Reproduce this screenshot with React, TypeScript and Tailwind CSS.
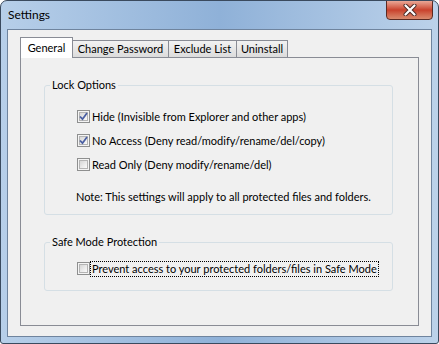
import React from "react";

const font = { fontFamily: 'Lato, "Noto Sans", sans-serif' };

function CheckBox({ checked }: { checked: boolean }) {
  return (
    <span className="w-[13px] h-[13px] shrink-0 border border-[#8e8f8f] bg-[#f4f4f4] p-[1px] flex">
      <span className="flex-1 border border-[#b4b4b4] bg-gradient-to-br from-[#d6d6d6] to-[#fbfbfb] flex items-center justify-center">
        {checked && (
          <svg width="9" height="9" viewBox="0 0 9 9" className="-m-[1px]">
            <path d="M1 4.5 L3.5 7.2 L8 1" fill="none" stroke="#4a5fa3" strokeWidth="1.8" />
          </svg>
        )}
      </span>
    </span>
  );
}

function Option({ label, checked, focused }: { label: string; checked: boolean; focused?: boolean }) {
  return (
    <div className="flex items-center h-[13px]">
      <CheckBox checked={checked} />
      <span
        className={`ml-[1px] px-[1px] leading-[14px] whitespace-nowrap ${
          focused ? "outline outline-1 outline-dotted outline-black" : ""
        }`}
      >
        {label}
      </span>
    </div>
  );
}

function Group({ title, children, className }: { title: string; children: React.ReactNode; className?: string }) {
  return (
    <div className={`relative border border-[#d5dfe5] rounded-[3px] ${className ?? ""}`}>
      <span className="absolute -top-[9px] left-[5px] px-[2px] bg-[#f0f0f0] leading-[16px]">{title}</span>
      {children}
    </div>
  );
}

const tabs = [
  { label: "Change Password", w: "w-[97px]" },
  { label: "Exclude List", w: "w-[69px]" },
  { label: "Uninstall", w: "w-[52px]" },
];

export default function App() {
  return (
    <div className="w-[439px] h-[344px] text-[11px] text-black" style={font}>
      <div className="w-full h-full flex flex-col border border-[#3a4a5e] rounded-t-[7px] rounded-b-[3px] bg-gradient-to-r from-[#b7cfe9] via-[#8fb1d8] to-[#bcd2ea] overflow-hidden">
        {/* title bar */}
        <div className="h-[28px] flex items-start justify-between shrink-0">
          <span className="ml-[7px] mt-[6px] leading-[16px] text-[12px]">Settings</span>
          <div className="mr-[5px] w-[47px] h-[20px] -mt-[1px] rounded-b-[4px] border border-[#5b2a22] bg-gradient-to-b from-[#e9a797] via-[#c9412c] to-[#d98a6e] flex items-center justify-center">
            <svg width="14" height="12" viewBox="0 0 14 12">
              <path d="M2.5 1.5 L11.5 10.5 M11.5 1.5 L2.5 10.5" stroke="#4a2a26" strokeWidth="4" strokeLinecap="round" />
              <path d="M2.5 1.5 L11.5 10.5 M11.5 1.5 L2.5 10.5" stroke="#ffffff" strokeWidth="2.2" strokeLinecap="round" />
            </svg>
          </div>
        </div>
        {/* client */}
        <div className="flex-1 mx-[6px] mb-[6px] border border-[#6f849e] bg-[#f0f0f0] flex flex-col">
          <div className="ml-[12px] mt-[7px] w-[399px]">
            {/* tab strip */}
            <div className="flex items-end h-[20px] relative z-10">
              <div className="h-[21px] w-[53px] -mb-[1px] border border-b-0 border-[#898c95] bg-white flex justify-center pt-[2px] leading-[16px]">
                General
              </div>
              {tabs.map((t) => (
                <div
                  key={t.label}
                  className={`h-[17px] -ml-[1px] first:ml-0 border border-b-0 border-[#898c95] bg-gradient-to-b from-[#f2f2f2] to-[#dcdcdc] flex justify-center leading-[16px] ${t.w}`}
                >
                  {t.label}
                </div>
              ))}
            </div>
            {/* panel */}
            <div className="h-[269px] border border-[#898c95] bg-[#f0f0f0] pt-[27px] pl-[23px]">
              <Group title="Lock Options" className="w-[349px] h-[130px] pt-[24px] pl-[32px]">
                <div className="flex flex-col gap-[11px]">
                  <Option label="Hide (Invisible from Explorer and other apps)" checked />
                  <Option label="No Access (Deny read/modify/rename/del/copy)" checked />
                  <Option label="Read Only (Deny modify/rename/del)" checked={false} />
                </div>
                <div className="mt-[19px] -ml-[1px] leading-[14px] whitespace-nowrap">
                  Note: This settings will apply to all protected files and folders.
                </div>
              </Group>
              <Group title="Safe Mode Protection" className="mt-[27px] w-[349px] h-[49px] pt-[19px] pl-[32px]">
                <Option label="Prevent access to your protected folders/files in Safe Mode" checked={false} focused />
              </Group>
            </div>
          </div>
        </div>
      </div>
    </div>
  );
}
